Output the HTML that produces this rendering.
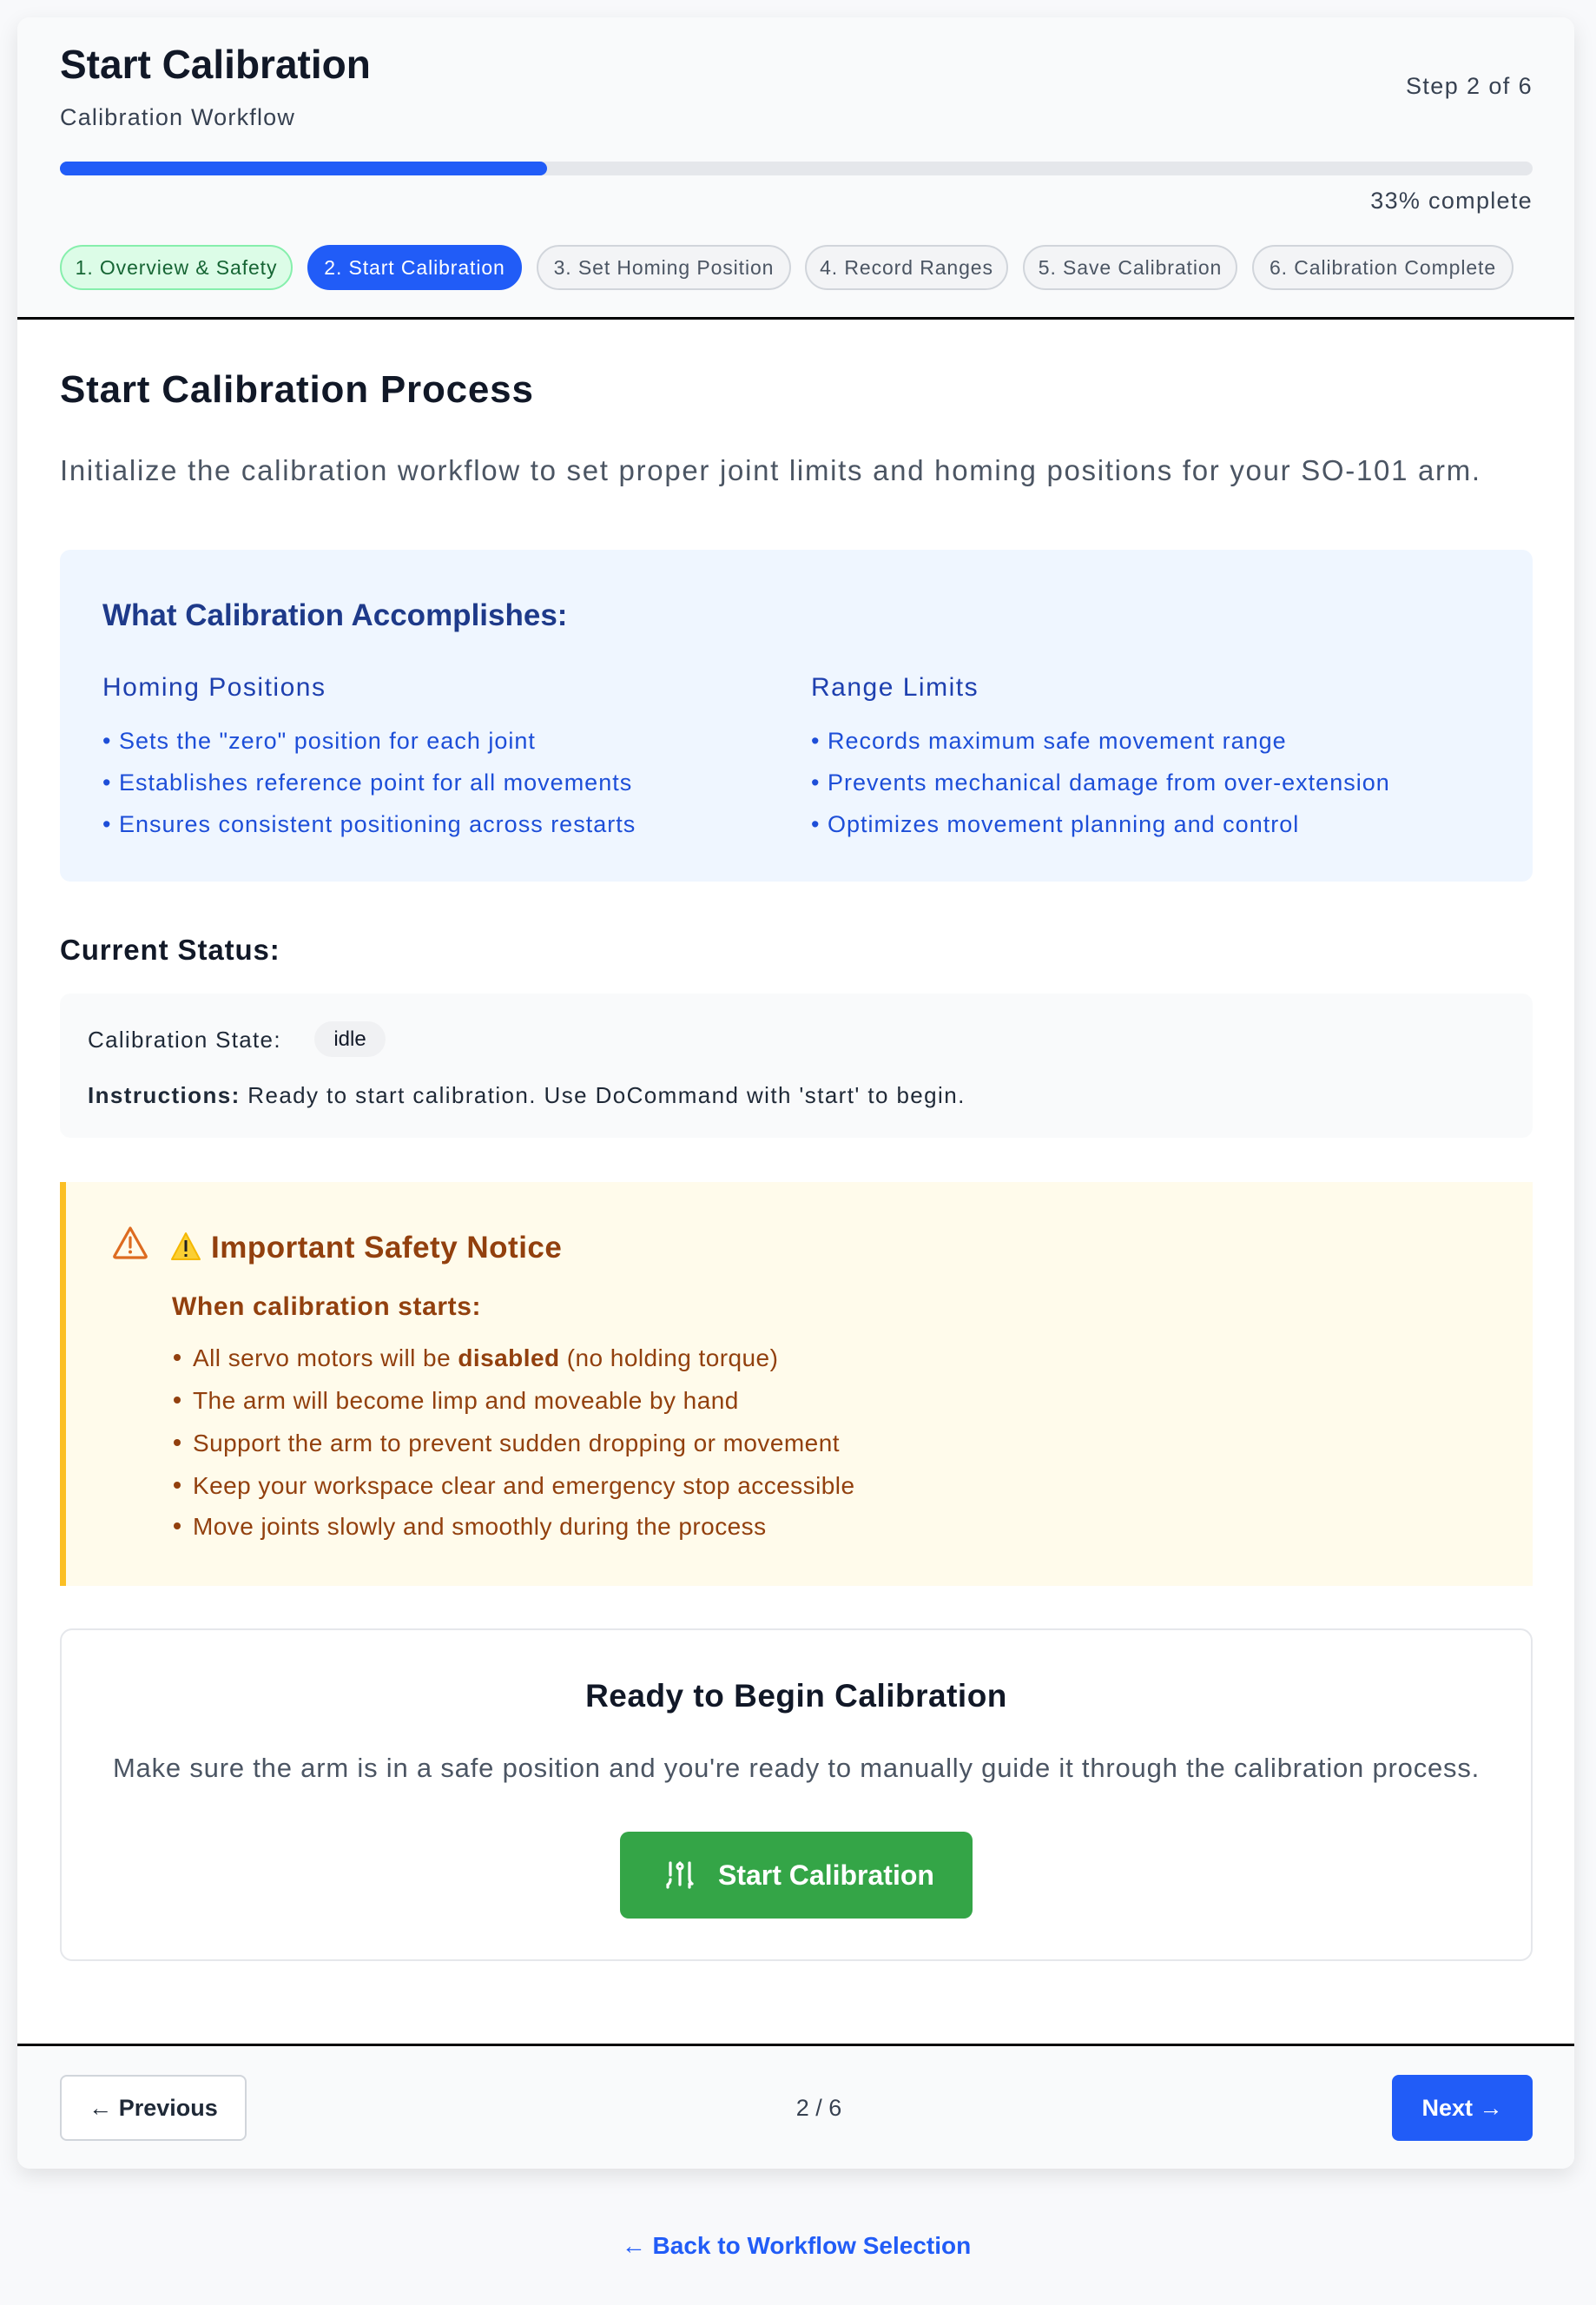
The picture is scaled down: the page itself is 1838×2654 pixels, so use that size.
<!DOCTYPE html>
<html><head><meta charset="utf-8">
<style>
*{margin:0;padding:0;box-sizing:border-box}
html,body{width:1838px;height:2654px;background:#f8f9fb;font-family:"Liberation Sans",Arial,sans-serif;overflow:hidden}
.a{position:absolute;white-space:nowrap}
.card{position:absolute;left:20px;top:20px;width:1793px;height:2477px;background:#fff;border-radius:14px;box-shadow:0 8px 24px rgba(0,0,0,.10);overflow:hidden}
.pill{position:absolute;top:282px;height:52px;border-radius:26px;font-size:23px;line-height:48px;text-align:center;border:2px solid #d1d5db;background:#f3f4f6;color:#4b5563;letter-spacing:0.9px}
.blue{color:#1d4ed8;font-size:27px;letter-spacing:1px}
.warn{color:#92400e;font-size:28px;letter-spacing:0.45px}
.dot{display:inline-block;width:8px;height:8px;border-radius:50%;background:#92400e;margin-right:14px;vertical-align:middle;position:relative;top:-3px}
</style></head><body>
<div class="card"></div>
<div class="a" style="left:20px;top:20px;width:1793px;height:346px;background:#f9fafb;border-radius:14px 14px 0 0"></div>
<div class="a" style="left:20px;top:365px;width:1793px;height:3px;background:#000"></div>
<div class="a" style="left:69px;top:46px;font-size:46px;font-weight:bold;color:#111827;line-height:56px">Start Calibration</div>
<div class="a" style="left:69px;top:118px;font-size:27px;color:#374151;line-height:34px;letter-spacing:1.2px">Calibration Workflow</div>
<div class="a" style="right:73px;top:82px;font-size:27px;color:#374151;line-height:34px;letter-spacing:1.4px">Step 2 of 6</div>
<div class="a" style="left:69px;top:186px;width:1696px;height:16px;background:#e5e7eb;border-radius:8px"></div>
<div class="a" style="left:69px;top:186px;width:561px;height:16px;background:#215cf7;border-radius:8px"></div>
<div class="a" style="right:73px;top:214px;font-size:27px;color:#374151;line-height:34px;letter-spacing:1.3px">33% complete</div>
<div class="pill" style="left:69px;width:268px;background:#dcfce7;border-color:#86efac;color:#166534">1. Overview &amp; Safety</div>
<div class="pill" style="left:354px;width:247px;background:#215cf7;border-color:#215cf7;color:#fff">2. Start Calibration</div>
<div class="pill" style="left:618px;width:293px">3. Set Homing Position</div>
<div class="pill" style="left:927px;width:234px">4. Record Ranges</div>
<div class="pill" style="left:1178px;width:247px">5. Save Calibration</div>
<div class="pill" style="left:1442px;width:301px">6. Calibration Complete</div>

<div class="a" style="left:69px;top:421px;font-size:44px;font-weight:bold;color:#111827;line-height:56px;letter-spacing:0.8px">Start Calibration Process</div>
<div class="a" style="left:69px;top:522px;font-size:33px;color:#4b5563;line-height:40px;letter-spacing:1.7px">Initialize the calibration workflow to set proper joint limits and homing positions for your SO-101 arm.</div>

<div class="a" style="left:69px;top:633px;width:1696px;height:382px;background:#eff6ff;border-radius:12px"></div>
<div class="a" style="left:118px;top:688px;font-size:35px;font-weight:bold;color:#1e3a8a;line-height:42px">What Calibration Accomplishes:</div>
<div class="a" style="left:118px;top:773px;font-size:30px;color:#1e40af;line-height:38px;letter-spacing:1.5px">Homing Positions</div>
<div class="a blue" style="left:118px;top:836px;line-height:34px">• Sets the "zero" position for each joint</div>
<div class="a blue" style="left:118px;top:884px;line-height:34px">• Establishes reference point for all movements</div>
<div class="a blue" style="left:118px;top:932px;line-height:34px">• Ensures consistent positioning across restarts</div>
<div class="a" style="left:934px;top:773px;font-size:30px;color:#1e40af;line-height:38px;letter-spacing:1.5px">Range Limits</div>
<div class="a blue" style="left:934px;top:836px;line-height:34px">• Records maximum safe movement range</div>
<div class="a blue" style="left:934px;top:884px;line-height:34px">• Prevents mechanical damage from over-extension</div>
<div class="a blue" style="left:934px;top:932px;line-height:34px">• Optimizes movement planning and control</div>

<div class="a" style="left:69px;top:1074px;font-size:33px;font-weight:bold;color:#111827;line-height:40px;letter-spacing:0.9px">Current Status:</div>
<div class="a" style="left:69px;top:1144px;width:1696px;height:166px;background:#f9fafb;border-radius:12px"></div>
<div class="a" style="left:101px;top:1180px;font-size:26px;color:#1f2937;line-height:34px;letter-spacing:1.3px">Calibration State:</div>
<div class="a" style="left:362px;top:1176px;width:82px;height:41px;background:#f0f1f3;border-radius:21px;font-size:24px;line-height:41px;text-align:center;color:#111827">idle</div>
<div class="a" style="left:101px;top:1244px;font-size:26px;color:#1f2937;line-height:34px;letter-spacing:1.4px"><b>Instructions:</b> Ready to start calibration. Use DoCommand with 'start' to begin.</div>

<div class="a" style="left:69px;top:1361px;width:1696px;height:465px;background:#fffbeb"></div>
<div class="a" style="left:69px;top:1361px;width:7px;height:465px;background:#fbbf24"></div>
<svg class="a" style="left:128px;top:1410px" width="44" height="42" viewBox="0 0 44 42"><path d="M22 4 L40 36 Q41 38 38 38 L6 38 Q3 38 4 36 Z" fill="none" stroke="#dd6b20" stroke-width="3.2" stroke-linejoin="round"/><line x1="22" y1="15" x2="22" y2="26" stroke="#dd6b20" stroke-width="3.2" stroke-linecap="round"/><circle cx="22" cy="31.5" r="2" fill="#dd6b20"/></svg>
<svg class="a" style="left:196px;top:1418px" width="36" height="34" viewBox="0 0 36 34"><path d="M18 2 L34 32 L2 32 Z" fill="#fbcf33" stroke="#f5b800" stroke-width="2" stroke-linejoin="round"/><rect x="16.5" y="10" width="3" height="13" fill="#222"/><rect x="16.5" y="26" width="3" height="3" fill="#222"/></svg>
<div class="a" style="left:243px;top:1416px;font-size:35px;font-weight:bold;color:#92400e;line-height:42px;letter-spacing:0.5px">Important Safety Notice</div>
<div class="a" style="left:198px;top:1487px;font-size:30px;font-weight:bold;color:#92400e;line-height:36px;letter-spacing:0.6px">When calibration starts:</div>
<div class="a warn" style="left:200px;top:1547px;line-height:34px"><span class="dot"></span>All servo motors will be <b>disabled</b> (no holding torque)</div>
<div class="a warn" style="left:200px;top:1596px;line-height:34px"><span class="dot"></span>The arm will become limp and moveable by hand</div>
<div class="a warn" style="left:200px;top:1645px;line-height:34px"><span class="dot"></span>Support the arm to prevent sudden dropping or movement</div>
<div class="a warn" style="left:200px;top:1694px;line-height:34px"><span class="dot"></span>Keep your workspace clear and emergency stop accessible</div>
<div class="a warn" style="left:200px;top:1741px;line-height:34px"><span class="dot"></span>Move joints slowly and smoothly during the process</div>

<div class="a" style="left:69px;top:1875px;width:1696px;height:383px;border:2px solid #e5e7eb;border-radius:14px;background:#fff"></div>
<div class="a" style="left:69px;width:1696px;top:1931px;text-align:center;font-size:37px;font-weight:bold;color:#111827;line-height:44px;letter-spacing:0.5px">Ready to Begin Calibration</div>
<div class="a" style="left:69px;width:1696px;top:2017px;text-align:center;font-size:31px;color:#4b5563;line-height:38px;letter-spacing:0.8px">Make sure the arm is in a safe position and you're ready to manually guide it through the calibration process.</div>
<div class="a" style="left:714px;top:2109px;width:406px;height:100px;background:#34a547;border-radius:10px"></div>
<svg class="a" style="left:766px;top:2142px" width="34" height="36" viewBox="0 0 34 36" fill="none" stroke="#fff" stroke-width="3.2" stroke-linecap="round"><path d="M6 3v14M6 22 q0 4 -3 6 M3 28 v3"/><path d="M17 10v18M17 3v1"/><circle cx="17" cy="7" r="3"/><path d="M28 3v18 q0 4 3 6 M28 27 v4 M31 27 l-3 0"/></svg>
<div class="a" style="left:827px;top:2140px;font-size:32px;color:#fff;line-height:38px;font-weight:600">Start Calibration</div>

<div class="a" style="left:20px;top:2353px;width:1793px;height:3px;background:#000"></div>
<div class="a" style="left:20px;top:2356px;width:1793px;height:141px;background:#f9fafb;border-radius:0 0 14px 14px"></div>
<div class="a" style="left:69px;top:2389px;width:215px;height:76px;background:#fff;border:2px solid #d1d5db;border-radius:8px;text-align:center;font-size:27px;line-height:72px;color:#1f2937;font-weight:600">← Previous</div>
<div class="a" style="left:843px;width:200px;top:2410px;text-align:center;font-size:27px;color:#374151;line-height:34px">2 / 6</div>
<div class="a" style="left:1603px;top:2389px;width:162px;height:76px;background:#215cf7;border-radius:8px;text-align:center;font-size:27px;line-height:76px;color:#fff;font-weight:600">Next →</div>
<div class="a" style="left:0;width:1834px;top:2568px;text-align:center;font-size:28px;color:#215cf7;line-height:36px;font-weight:600">← Back to Workflow Selection</div>
</body></html>
